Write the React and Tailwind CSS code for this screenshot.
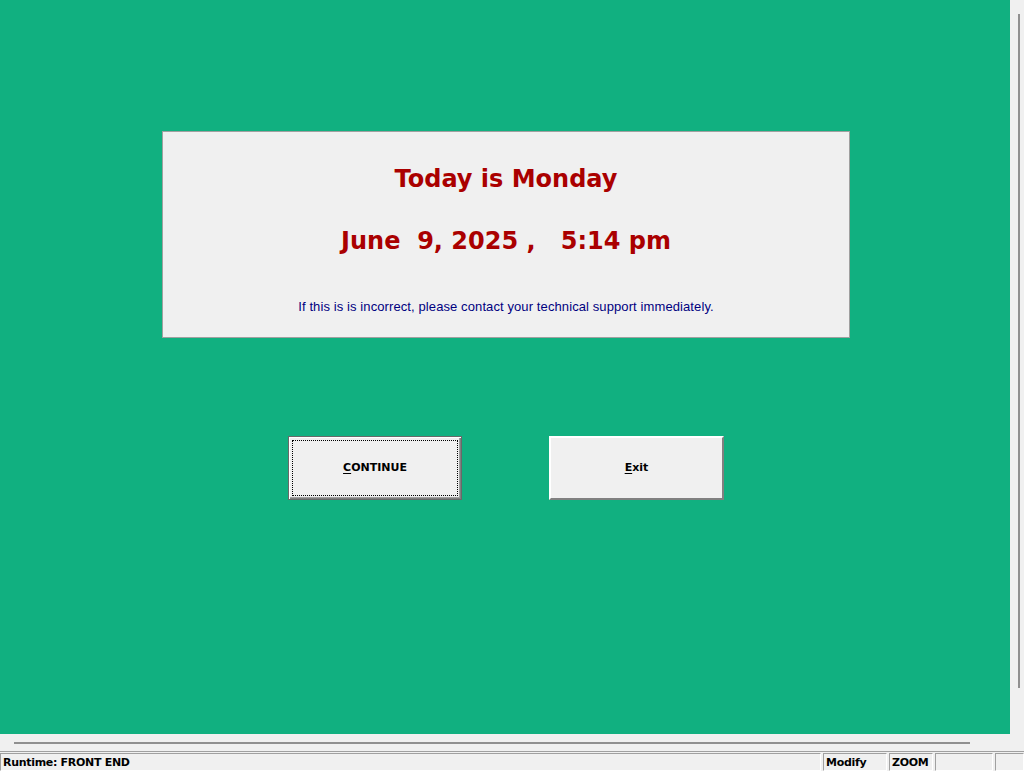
import React from 'react';

const sys = { fontFamily: '"DejaVu Sans", Tahoma, sans-serif' };

function StatusCell({ children, className = '' }) {
  return (
    <div
      className={`h-full border-t border-l border-[#a0a0a0] border-b border-r border-b-white border-r-white flex items-center px-[2px] text-[11px] font-bold text-black leading-none tracking-[-0.3px] ${className}`}
      style={sys}
    >
      {children}
    </div>
  );
}

export default function App() {
  return (
    <div className="w-[1024px] h-[771px] bg-[#f0f0f0] flex flex-col overflow-hidden select-none">
      <div className="flex h-[734px]">
        <div className="w-[1010px] h-full bg-[#11b080] flex flex-col">
          <div className="ml-[162px] mt-[131px] w-[688px] h-[207px] bg-[#f0f0f0] border border-[#a0a0a0] flex flex-col items-center">
            <h1
              className="mt-[35px] text-[24px] font-bold text-[#aa0000] leading-none"
              style={{ fontFamily: '"DejaVu Sans", Verdana, sans-serif' }}
            >
              Today is Monday
            </h1>
            <p
              className="mt-[38px] text-[24px] font-bold text-[#aa0000] leading-none whitespace-pre"
              style={{ fontFamily: '"DejaVu Sans", Verdana, sans-serif' }}
            >
              {'June  9, 2025 ,   5:14 pm'}
            </p>
            <p
              className="mt-[47px] text-[13px] text-[#000080] leading-none tracking-[0.1px]"
              style={{ fontFamily: '"Liberation Sans", Arial, sans-serif' }}
            >
              If this is is incorrect, please contact your technical support immediately.
            </p>
          </div>

          <div className="flex mt-[98px]">
            <button className="ml-[288px] w-[174px] h-[64px] bg-[#f0f0f0] border border-[#696969] shadow-[inset_1px_1px_0_#ffffff,inset_-1px_-1px_0_#808080,inset_-2px_-2px_0_#a0a0a0] p-[3px]">
              <div className="w-full h-full border border-dotted border-black flex items-center justify-center">
                <span className="text-[11px] font-bold text-black" style={sys}>
                  <span className="underline underline-offset-2">C</span>ONTINUE
                </span>
              </div>
            </button>
            <button className="ml-[87px] w-[175px] h-[64px] bg-[#f0f0f0] border-t-2 border-l-2 border-white border-b-2 border-r-2 border-b-[#808080] border-r-[#808080] flex items-center justify-center">
              <span className="text-[11px] font-bold text-black" style={sys}>
                <span className="underline underline-offset-2">E</span>xit
              </span>
            </button>
          </div>
        </div>
        <div className="w-[14px] h-full relative">
          <div className="absolute left-[8px] top-[14px] w-[2px] h-[674px] bg-[#909090]" />
        </div>
      </div>

      <div className="h-[17px] relative">
        <div className="absolute left-[14px] top-[8px] w-[956px] h-[2px] bg-[#909090]" />
      </div>

      <div className="h-[20px] border-t border-[#a0a0a0] flex gap-[2px] pt-[1px]">
        <StatusCell className="w-[821px]">Runtime: FRONT END</StatusCell>
        <StatusCell className="w-[64px]">Modify</StatusCell>
        <StatusCell className="w-[44px]">ZOOM</StatusCell>
        <StatusCell className="w-[58px]" />
        <StatusCell className="flex-1" />
      </div>
    </div>
  );
}
